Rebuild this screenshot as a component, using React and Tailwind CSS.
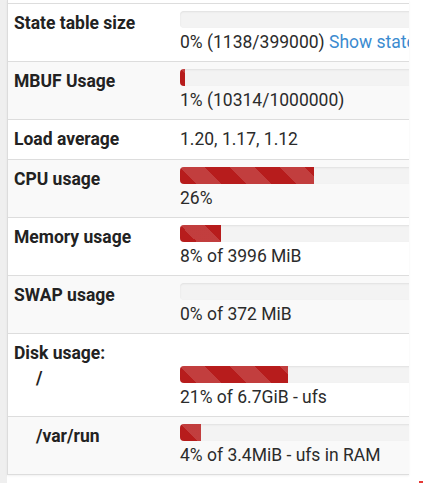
import React from "react";

const stripe =
  "bg-[#b71c1c] bg-[linear-gradient(45deg,rgba(255,255,255,.15)_25%,transparent_25%,transparent_50%,rgba(255,255,255,.15)_50%,rgba(255,255,255,.15)_75%,transparent_75%,transparent)] bg-[length:50px_50px]";

function Bar({ pct }) {
  return (
    <div className="w-[514px] h-[17px] rounded-[4px] bg-[#f3f3f3] shadow-[inset_0_1px_2px_rgba(0,0,0,0.08)] overflow-hidden mb-[2px]">
      <div className={`h-full ${stripe}`} style={{ width: `${pct}%` }} />
    </div>
  );
}

function Row({ label, indent, bar, text, link, bg, border = true, pt = "pt-[7px]", pb = "pb-[6px]" }) {
  return (
    <div className={`flex ${bg} ${border ? "border-t border-[#dddddd]" : ""} ${pt} ${pb}`}>
      <div className={`w-[166px] shrink-0 font-bold text-[#222] ${indent ? "pl-[28px]" : "pl-[6px]"}`}>
        {label}
      </div>
      <div className="pl-[6px] shrink-0">
        {bar !== undefined && <Bar pct={bar} />}
        {text !== undefined && (
          <div className="whitespace-nowrap text-[#2b2b2b]">
            {text}
            {link && <span className="text-[#3b8bd0]"> {link}</span>}
          </div>
        )}
      </div>
    </div>
  );
}

export default function App() {
  return (
    <div
      className="flex w-[423px] h-[483px] bg-white text-[17.5px] leading-[25px] relative"
      style={{ fontFamily: "Roboto, 'Liberation Sans', sans-serif" }}
    >
      <div className="w-[7px] h-full bg-[#efefef] shrink-0" />
      <div className="w-[402px] shrink-0 border-l border-[#dcdcdc] overflow-hidden self-start shadow-[0_1px_2px_rgba(0,0,0,0.06)]">
        <div className="h-[3px] bg-white" />
        <Row label="State table size" bar={0} text="0% (1138/399000)" link="Show states" bg="bg-white" />
        <Row label="MBUF Usage" bar={1} text="1% (10314/1000000)" bg="bg-[#f9f9f9]" />
        <Row label="Load average" text="1.20, 1.17, 1.12" bg="bg-white" pb="pb-[7px]" />
        <Row label="CPU usage" bar={26} text="26%" bg="bg-[#f9f9f9]" />
        <Row label="Memory usage" bar={8} text="8% of 3996 MiB" bg="bg-white" />
        <Row label="SWAP usage" bar={0} text="0% of 372 MiB" bg="bg-[#f9f9f9]" />
        <Row label="Disk usage:" bg="bg-white" pb="pb-0" />
        <Row label="/" indent bar={21} text="21% of 6.7GiB - ufs" bg="bg-white" border={false} pt="pt-0" />
        <div className="border-b border-[#dddddd]">
          <Row label="/var/run" indent bar={4} text="4% of 3.4MiB - ufs in RAM" bg="bg-[#f9f9f9]" />
        </div>
      </div>
      <div className="absolute left-[419px] top-[481px] w-[4px] h-[2px] bg-[#e53935]" />
    </div>
  );
}
